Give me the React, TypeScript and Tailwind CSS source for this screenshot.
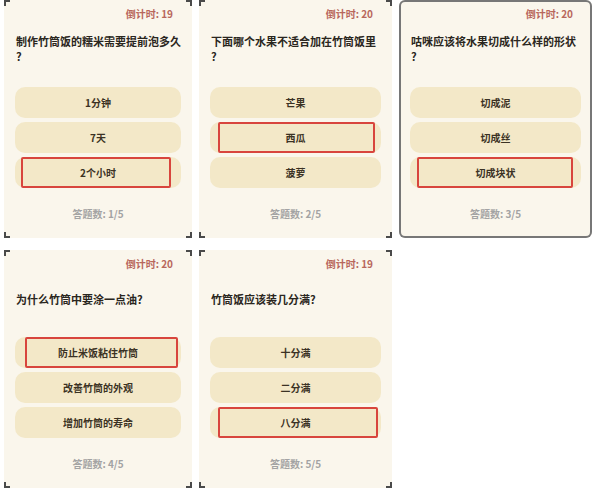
import React from 'react';

interface Quiz {
  time: number;
  question: string[];
  options: string[];
  answer: number;
  // red highlight inset inside the chosen option [left, right]
  inset: [number, number];
  index: number;
}

const quizzes: Quiz[] = [
  { time: 19, question: ['制作竹筒饭的糯米需要提前泡多久', '?'], options: ['1分钟', '7天', '2个小时'], answer: 2, inset: [6, 10], index: 1 },
  { time: 20, question: ['下面哪个水果不适合加在竹筒饭里', '?'], options: ['芒果', '西瓜', '菠萝'], answer: 1, inset: [8, 6], index: 2 },
  { time: 20, question: ['咕咪应该将水果切成什么样的形状', '?'], options: ['切成泥', '切成丝', '切成块状'], answer: 2, inset: [7, 8], index: 3 },
  { time: 20, question: ['为什么竹筒中要涂一点油?'], options: ['防止米饭粘住竹筒', '改善竹筒的外观', '增加竹筒的寿命'], answer: 0, inset: [10, 3], index: 4 },
  { time: 19, question: ['竹筒饭应该装几分满?'], options: ['十分满', '二分满', '八分满'], answer: 2, inset: [8, 3], index: 5 },
];

const Corners: React.FC = () => (
  <>
    <span className="absolute left-0 top-0 w-[6px] h-[6px] border-l-2 border-t-2 border-[#4a4a4a]" />
    <span className="absolute right-0 top-0 w-[6px] h-[6px] border-r-2 border-t-2 border-[#4a4a4a]" />
    <span className="absolute left-0 bottom-0 w-[6px] h-[6px] border-l-2 border-b-2 border-[#4a4a4a]" />
    <span className="absolute right-0 bottom-0 w-[6px] h-[6px] border-r-2 border-b-2 border-[#4a4a4a]" />
  </>
);

const QuizCard: React.FC<{ quiz: Quiz; framed?: boolean }> = ({ quiz, framed = false }) => (
  <div
    className={`relative h-[238px] bg-[#faf6ec] px-[11px] pt-[8px] flex flex-col ${
      framed ? 'ring-2 ring-inset ring-[#777777] rounded-md' : ''
    }`}
  >
    {!framed && <Corners />}

    {/* Countdown */}
    <div className="text-right pr-[8px] text-[10px] leading-[12px] font-bold text-[#b8675c]">
      倒计时: {quiz.time}
    </div>

    {/* Question */}
    <div className="mt-[14px] h-[30px] flex flex-col justify-center px-[1px] whitespace-nowrap text-[11px] leading-[15px] font-bold text-[#2a2620]">
      {quiz.question.map((line, i) => (
        <div key={i}>{line}</div>
      ))}
    </div>

    {/* Options */}
    <div className="mt-[23px] flex flex-col gap-[4px]">
      {quiz.options.map((opt, i) => (
        <div
          key={opt}
          className="relative h-[31px] rounded-[10px] bg-[#f3e8c8] flex items-center justify-center text-[10px] font-bold text-[#3b3224]"
        >
          {opt}
          {i === quiz.answer && (
            <span
              className="absolute top-0 bottom-0 border-[2.5px] border-[#d8453d] rounded-[2px]"
              style={{ left: quiz.inset[0], right: quiz.inset[1] }}
            />
          )}
        </div>
      ))}
    </div>

    {/* Progress */}
    <div className="mt-[20px] text-center text-[10px] leading-[12px] font-bold text-[#a3a3a3]">
      答题数: {quiz.index}/5
    </div>
  </div>
);

export default function App() {
  return (
    <div
      className="w-[602px] h-[496px] bg-white pl-[4px] grid grid-cols-[188px_193px_193px] gap-x-[7px] gap-y-[12px] content-start"
      style={{ fontFamily: '"Noto Sans CJK SC", "Noto Sans", sans-serif' }}
    >
      {quizzes.map((q, i) => (
        <QuizCard key={q.index} quiz={q} framed={i === 2} />
      ))}
    </div>
  );
}
